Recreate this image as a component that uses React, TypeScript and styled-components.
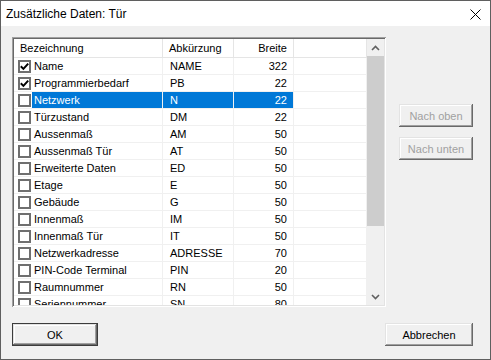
import styled, { createGlobalStyle } from "styled-components";

const GlobalStyle = createGlobalStyle`
  html, body {
    margin: 0;
    padding: 0;
    background: #f0f0f0;
  }
  * {
    box-sizing: border-box;
  }
`;

type Item = {
  name: string;
  short: string;
  width: number;
  checked?: boolean;
  selected?: boolean;
};

const items: Item[] = [
  { name: "Name", short: "NAME", width: 322, checked: true },
  { name: "Programmierbedarf", short: "PB", width: 22, checked: true },
  { name: "Netzwerk", short: "N", width: 22, selected: true },
  { name: "Türzustand", short: "DM", width: 22 },
  { name: "Aussenmaß", short: "AM", width: 50 },
  { name: "Aussenmaß Tür", short: "AT", width: 50 },
  { name: "Erweiterte Daten", short: "ED", width: 50 },
  { name: "Etage", short: "E", width: 50 },
  { name: "Gebäude", short: "G", width: 50 },
  { name: "Innenmaß", short: "IM", width: 50 },
  { name: "Innenmaß Tür", short: "IT", width: 50 },
  { name: "Netzwerkadresse", short: "ADRESSE", width: 70 },
  { name: "PIN-Code Terminal", short: "PIN", width: 20 },
  { name: "Raumnummer", short: "RN", width: 50 },
  { name: "Seriennummer", short: "SN", width: 80 },
];

const App = () => {
  return (
    <>
      <GlobalStyle />
      <Window>
        <TitleBar>
          <Title>Zusätzliche Daten: Tür</Title>
          <CloseButton>
            <svg width="11" height="11" viewBox="0 0 11 11">
              <path d="M0.5 0.5 L10.5 10.5 M10.5 0.5 L0.5 10.5" stroke="#000" strokeWidth="1" />
            </svg>
          </CloseButton>
        </TitleBar>
        <Client>
          <MainRow>
            <ListFrame>
              <ListArea>
                <Header>
                  <HeaderCell>Bezeichnung</HeaderCell>
                  <HeaderCell>Abkürzung</HeaderCell>
                  <HeaderCell $right>Breite</HeaderCell>
                  <HeaderCell />
                </Header>
                <Rows>
                  {items.map((item) => (
                    <Row key={item.name}>
                      <CheckCell>
                        <CheckBox>
                          {item.checked && (
                            <svg width="9" height="9" viewBox="0 0 9 9">
                              <path d="M0.8 4.3 L3.4 6.9 L8.2 1.6" stroke="#000" strokeWidth="2" fill="none" />
                            </svg>
                          )}
                        </CheckBox>
                      </CheckCell>
                      <Cell $selected={item.selected} $pad={2}>
                        {item.name}
                      </Cell>
                      <Cell $selected={item.selected} $pad={7}>
                        {item.short}
                      </Cell>
                      <Cell $selected={item.selected} $right>
                        {item.width}
                      </Cell>
                      <Cell />
                    </Row>
                  ))}
                </Rows>
              </ListArea>
              <ScrollBar>
                <ArrowButton>
                  <svg width="9" height="6" viewBox="0 0 9 6">
                    <path d="M1 5 L4.5 1.5 L8 5" stroke="#606060" strokeWidth="1.6" fill="none" />
                  </svg>
                </ArrowButton>
                <Track>
                  <Thumb />
                </Track>
                <ArrowButton>
                  <svg width="9" height="6" viewBox="0 0 9 6">
                    <path d="M1 1 L4.5 4.5 L8 1" stroke="#606060" strokeWidth="1.6" fill="none" />
                  </svg>
                </ArrowButton>
              </ScrollBar>
            </ListFrame>
            <SideButtons>
              <Button $width={74} disabled>
                Nach oben
              </Button>
              <Button $width={74} disabled>
                Nach unten
              </Button>
            </SideButtons>
          </MainRow>
          <Footer>
            <Button $width={86} $default>
              OK
            </Button>
            <Button $width={88}>Abbrechen</Button>
          </Footer>
        </Client>
      </Window>
    </>
  );
};

const Window = styled.div`
  width: 491px;
  height: 360px;
  border: 1px solid #5f5f5f;
  background: #f0f0f0;
  display: flex;
  flex-direction: column;
  font-family: "Liberation Sans", Arial, sans-serif;
  font-size: 11px;
  color: #000;
`;

const TitleBar = styled.div`
  height: 25px;
  background: #fff;
  display: flex;
  align-items: center;
  justify-content: space-between;
  padding: 0 9px 0 5px;
`;

const Title = styled.div`
  font-size: 12px;
  padding-top: 1px;
`;

const CloseButton = styled.div`
  width: 11px;
  height: 11px;
  display: flex;
  margin-top: 1px;
`;

const Client = styled.div`
  flex: 1;
  padding: 11px 17px 0 11px;
  display: flex;
  flex-direction: column;
`;

const MainRow = styled.div`
  display: flex;
  align-items: flex-start;
`;

const ListFrame = styled.div`
  width: 374px;
  height: 270px;
  padding: 2px;
  display: flex;
  background: #fff;
  box-shadow: inset 1px 1px #a0a0a0, inset -1px -1px #fff, inset 2px 2px #696969,
    inset -2px -2px #e3e3e3;
`;

const ListArea = styled.div`
  flex: 1;
  overflow: hidden;
  display: flex;
  flex-direction: column;
`;

const Header = styled.div`
  display: grid;
  grid-template-columns: 149px 71px 60px 1fr;
  height: 19px;
  border-bottom: 1px solid #e5e5e5;
  background: #fff;
`;

const HeaderCell = styled.div<{ $right?: boolean }>`
  border-right: 1px solid #e5e5e5;
  padding: 0 6px;
  line-height: 18px;
  text-align: ${(p) => (p.$right ? "right" : "left")};
  white-space: nowrap;
`;

const Rows = styled.div`
  display: flex;
  flex-direction: column;
`;

const Row = styled.div`
  display: grid;
  grid-template-columns: 18px 131px 71px 60px 1fr;
  height: 17px;
  flex-shrink: 0;
  border-bottom: 1px solid #f0f0f0;
`;

const CheckCell = styled.div`
  display: flex;
  align-items: center;
  padding-left: 4px;
`;

const CheckBox = styled.div`
  width: 13px;
  height: 13px;
  border: 2px solid #6f6f6f;
  background: #fff;
  display: flex;
  align-items: center;
  justify-content: center;
`;

const Cell = styled.div<{ $selected?: boolean; $right?: boolean; $pad?: number }>`
  background: ${(p) => (p.$selected ? "#0078d7" : "transparent")};
  color: ${(p) => (p.$selected ? "#fff" : "#000")};
  border-right: 1px solid #f0f0f0;
  line-height: 16px;
  white-space: nowrap;
  overflow: hidden;
  text-align: ${(p) => (p.$right ? "right" : "left")};
  padding: ${(p) => (p.$right ? "0 6px 0 0" : `0 0 0 ${p.$pad ?? 0}px`)};
`;

const ScrollBar = styled.div`
  width: 17px;
  background: #f0f0f0;
  display: flex;
  flex-direction: column;
`;

const ArrowButton = styled.div`
  height: 17px;
  display: flex;
  align-items: center;
  justify-content: center;
`;

const Track = styled.div`
  flex: 1;
  display: flex;
  flex-direction: column;
`;

const Thumb = styled.div`
  height: 170px;
  background: #cdcdcd;
`;

const SideButtons = styled.div`
  margin-left: 13px;
  padding-top: 67px;
  display: flex;
  flex-direction: column;
  gap: 10px;
`;

const Button = styled.button<{ $width: number; $default?: boolean }>`
  width: ${(p) => p.$width}px;
  height: 23px;
  padding: 0;
  font-family: "Liberation Sans", Arial, sans-serif;
  font-size: 11px;
  color: ${(p) => (p.disabled ? "#a0a0a0" : "#000")};
  background: #f0f0f0;
  border: ${(p) => (p.$default ? "1px solid #3c3c3c" : "none")};
  box-shadow: inset -1px -1px #696969, inset 1px 1px #e3e3e3, inset -2px -2px #a0a0a0,
    inset 2px 2px #fff;
`;

const Footer = styled.div`
  margin-top: 16px;
  display: flex;
  justify-content: space-between;
  align-items: flex-start;
`;

export default App;
